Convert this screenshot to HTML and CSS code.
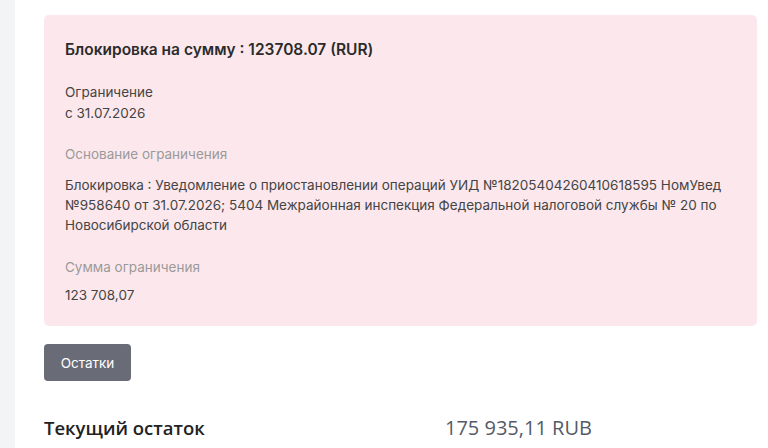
FILE: index.html
```html
<!DOCTYPE html>
<html lang="ru">
<head>
<meta charset="utf-8">
<link rel="stylesheet" href="styles.css">
</head>
<body>
<div class="layout">
  <div class="side"></div>
  <main class="panel">
    <section class="alert">
      <h2 class="alert-title">Блокировка на сумму : 123708.07 (RUR)</h2>
      <div class="block first">
        <div class="text">Ограничение</div>
        <div class="text">с 31.07.2026</div>
      </div>
      <div class="block second">
        <div class="label">Основание ограничения</div>
        <div class="para">Блокировка : Уведомление о приостановлении операций УИД №18205404260410618595 НомУвед №958640 от 31.07.2026; 5404 Межрайонная инспекция Федеральной налоговой службы № 20 по Новосибирской области</div>
      </div>
      <div class="block">
        <div class="label tight">Сумма ограничения</div>
        <div class="para">123 708,07</div>
      </div>
    </section>
    <button class="btn">Остатки</button>
    <div class="balance">
      <div class="balance-label">Текущий остаток</div>
      <div class="balance-value">175 935,11 RUB</div>
    </div>
  </main>
</div>
</body>
</html>
```
FILE: styles.css
```css
html, body {
  margin: 0;
  padding: 0;
  background: #ffffff;
  font-family: Inter, "Noto Sans", sans-serif;
  color: #333;
  overflow: hidden;
}
.layout {
  display: flex;
  height: 448px;
}
.side {
  width: 15px;
  background: #f3f4f6;
  flex-shrink: 0;
}
.panel {
  flex: 1;
  background: #fff;
  padding: 15px 11px 0 29px;
}
.alert {
  background: #fce8ec;
  border-radius: 5px;
  padding: 24px 21px 21px 21px;
}
.alert-title {
  margin: 0;
  font-size: 15.5px;
  font-weight: 600;
  color: #2b2b2b;
  line-height: 22px;
}
.block {
  margin-top: 22px;
}
.block.first {
  margin-top: 21px;
}
.block.second {
  margin-top: 20px;
}
.text {
  font-size: 13.5px;
  line-height: 21px;
  color: #444;
}
.label {
  font-size: 13.5px;
  line-height: 20px;
  color: #9a9a9a;
  margin-bottom: 11px;
}
.label.tight {
  margin-bottom: 8px;
}
.para {
  font-size: 13.5px;
  line-height: 20px;
  color: #444;
}
.btn {
  display: block;
  margin-top: 18px;
  background: #696c77;
  color: #fff;
  border: none;
  border-radius: 4px;
  width: 87px;
  height: 37px;
  font-family: Inter, "Noto Sans", sans-serif;
  font-size: 13.5px;
  padding: 0;
}
.balance {
  display: flex;
  align-items: baseline;
  margin-top: 33px;
  line-height: 28px;
}
.balance-label {
  width: 401px;
  font-family: "Open Sans", sans-serif;
  font-weight: 600;
  font-size: 18.5px;
  color: #222;
}
.balance-value {
  font-family: "Open Sans", sans-serif;
  font-size: 20px;
  color: #555a66;
}
```
